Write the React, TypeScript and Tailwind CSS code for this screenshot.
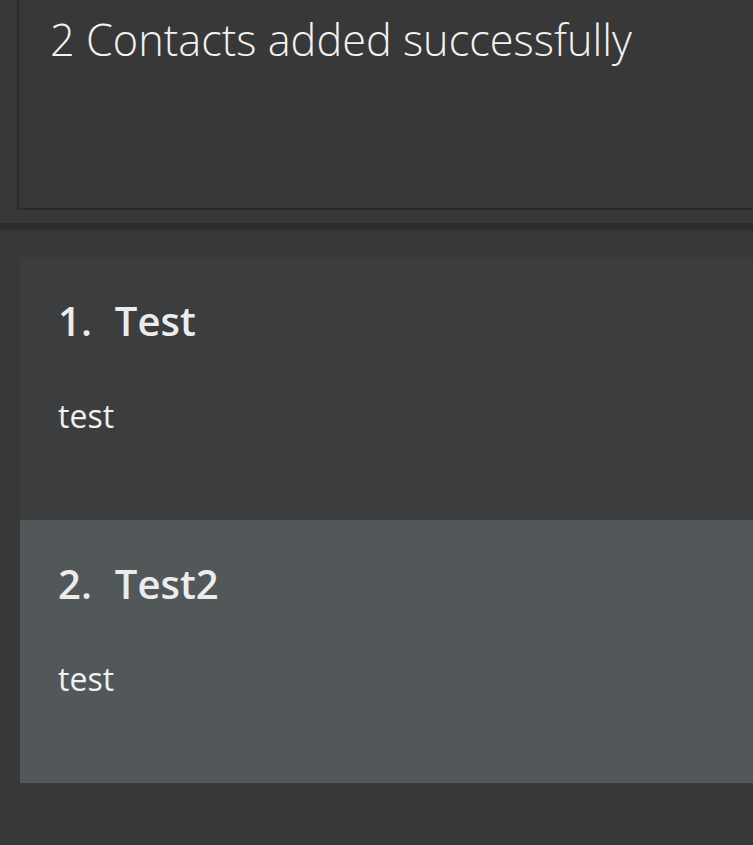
import React from 'react';

const contacts = [
  { id: 1, name: 'Test', note: 'test', bg: 'bg-[#3c3d3f]' },
  { id: 2, name: 'Test2', note: 'test', bg: 'bg-[#52575a]' },
];

const App: React.FC = () => {
  return (
    <div className="w-[753px] h-[845px] overflow-hidden bg-[#383838] font-['Open_Sans',sans-serif]">
      {/* result display */}
      <div className="ml-[17px] w-[760px] h-[210px] border-l-2 border-b-2 border-[#2b2b2b] pl-[31px] pt-[18px]">
        <p className="text-[43.3px] leading-none font-light text-[#f2f2f2] whitespace-nowrap">
          2 Contacts added successfully
        </p>
      </div>

      {/* split pane divider */}
      <div className="mt-[13px] h-[8px] flex flex-col">
        <div className="h-[5px] bg-[#2b2b2b]"></div>
        <div className="h-[3px] bg-[#303030]"></div>
      </div>

      {/* contact list */}
      <div className="mt-[26px] ml-[20px] flex flex-col">
        {contacts.map((c) => (
          <div key={c.id} className={`${c.bg} h-[263px] pl-[38px] pt-[44px]`}>
            <h3 className="flex gap-[23px] text-[40px] leading-none font-semibold text-[#ececec] whitespace-nowrap">
              <span>{c.id}.</span>
              <span>{c.name}</span>
            </h3>
            <p className="mt-[59px] text-[32px] leading-none text-[#f0f0f0]">{c.note}</p>
          </div>
        ))}
      </div>
    </div>
  );
};

export default App;
